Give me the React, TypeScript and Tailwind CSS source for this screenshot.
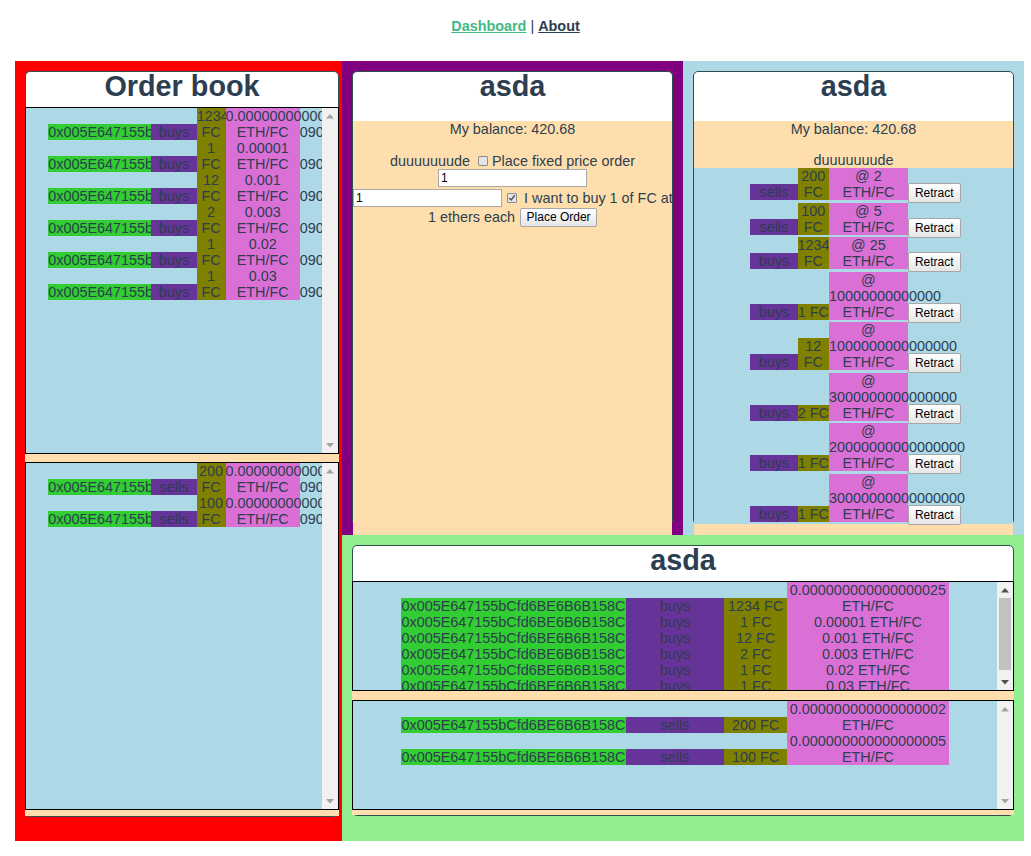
import React from 'react';

const ADDRESS = '0x005E647155bCfd6BE6B6B158C';

type Order = { amount: number; price: string; raw: string };

const buys: Order[] = [
    { amount: 1234, price: '0.000000000000000025', raw: '25' },
    { amount: 1, price: '0.00001', raw: '10000000000000' },
    { amount: 12, price: '0.001', raw: '1000000000000000' },
    { amount: 2, price: '0.003', raw: '3000000000000000' },
    { amount: 1, price: '0.02', raw: '20000000000000000' },
    { amount: 1, price: '0.03', raw: '30000000000000000' },
];

const sells: Order[] = [
    { amount: 200, price: '0.000000000000000002', raw: '2' },
    { amount: 100, price: '0.000000000000000005', raw: '5' },
];

function CheckBox({ checked }: { checked?: boolean }) {
    return (
        <span className="relative inline-block h-[10px] w-[10px] shrink-0 rounded-[1px] border border-[#8e8e8e] bg-[#e4e4e4]">
            {checked && (
                <svg viewBox="0 0 10 10" className="absolute left-0 top-0 h-[8px] w-[8px]">
                    <path d="M1.5 5 L4 7.5 L8.5 1.5" fill="none" stroke="#555" strokeWidth="1.8" />
                </svg>
            )}
        </span>
    );
}

function TextInput() {
    return (
        <input
            readOnly
            value="1"
            className="h-[18px] w-[149px] shrink-0 border border-[#a9a9a9] bg-white px-[2px] text-[12px] leading-[16px] text-black outline-none"
        />
    );
}

function OldButton({ children, className }: { children: React.ReactNode; className: string }) {
    return (
        <button className={`shrink-0 rounded-[2px] border border-[#a6a6a6] bg-linear-to-b from-white to-[#e6e6e6] text-[12px] leading-[16px] text-black ${className}`}>
            {children}
        </button>
    );
}

function Arrow({ down, active }: { down?: boolean; active?: boolean }) {
    return (
        <div className="flex h-[16px] w-[16px] items-center justify-center">
            <svg width="8" height="5" viewBox="0 0 8 5">
                <path d={down ? 'M0 0 L8 0 L4 4.5 Z' : 'M0 4.5 L8 4.5 L4 0 Z'} fill={active ? '#505050' : '#a3a3a3'} />
            </svg>
        </div>
    );
}

function BookRow({ order, side, tail }: { order: Order; side: string; tail?: boolean }) {
    return (
        <div className="mx-auto flex w-[85%] items-end text-center">
            <div className="w-[41%] shrink-0 bg-[#32cd32]">{ADDRESS}</div>
            <div className="w-[18%] shrink-0 bg-[#663399]">{side}</div>
            <div className="w-[11.5%] shrink-0 bg-[#808000]">{order.amount} FC</div>
            <div className="w-[29.5%] shrink-0 bg-[#da70d6]">{order.price} ETH/FC</div>
            {tail && <div className="w-0 shrink-0 whitespace-nowrap text-left">0901</div>}
        </div>
    );
}

function ScrollBox({ orders, side, height, tail, thumb }: { orders: Order[]; side: string; height: string; tail?: boolean; thumb?: boolean }) {
    return (
        <div className={`${height} flex border border-black bg-[#add8e6]`}>
            <div className="min-w-0 flex-1 overflow-hidden">
                {orders.map((o, i) => (
                    <BookRow key={i} order={o} side={side} tail={tail} />
                ))}
            </div>
            <div className="flex w-[16px] shrink-0 flex-col bg-[#f1f1f1]">
                <Arrow active={thumb} />
                <div className="flex-1 px-[2px]">
                    {thumb && <div className="h-[72px] bg-[#c1c1c1]" />}
                </div>
                <Arrow down active={thumb} />
            </div>
        </div>
    );
}

function MyOrderRow({ order, side }: { order: Order; side: string }) {
    return (
        <div className="flex items-end justify-center pb-[2.5px] pl-[4px] text-center">
            <div className="w-[15%] shrink-0 bg-[#663399]">{side}</div>
            <div className="w-[10%] shrink-0 bg-[#808000]">{order.amount} FC</div>
            <div className="w-[25%] shrink-0 bg-[#da70d6]">@ {order.raw} ETH/FC</div>
            <OldButton className="-mb-[3px] h-[20px] w-[53px]">Retract</OldButton>
        </div>
    );
}

export default function App() {
    return (
        <div className="min-h-[856px] bg-white font-['Liberation_Sans',Arial,sans-serif] text-[14.4px] leading-[16px] text-[#2c3e50]">
            <nav className="h-[61px] pt-[18px] text-center">
                <a className="font-bold text-[#42b983] underline">Dashboard</a> |{' '}
                <a className="font-bold underline">About</a>
            </nav>

            <div className="ml-[15px] grid w-[1009px] grid-cols-[327px_341px_341px] grid-rows-[474px_306px]">
                {/* order book */}
                <div className="row-span-2 bg-[#ff0000] pl-[10px] pt-[10px]">
                    <div className="w-[314px] rounded-[5px] border border-[#2f4f4f] bg-white">
                        <h1 className="h-[35px] text-center text-[28.8px] font-bold leading-[28px]">Order book</h1>
                        <div className="-mx-px bg-[#ffdead] pb-[6px]">
                            <ScrollBox orders={buys} side="buys" height="h-[347px]" tail />
                            <div className="h-[8px]" />
                            <ScrollBox orders={sells} side="sells" height="h-[348px]" tail />
                        </div>
                    </div>
                </div>

                {/* place order */}
                <div className="overflow-hidden bg-[#800080] px-[10px] pt-[10px]">
                    <div className="h-[454px] rounded-[5px] border border-[#2f4f4f] bg-white">
                        <h1 className="h-[49px] text-center text-[28.8px] font-bold leading-[28px]">asda</h1>
                        <div className="h-[440px] bg-[#ffdead] text-center">
                            <div className="h-[16px]">My balance: 420.68</div>
                            <div className="h-[15px]" />
                            <div className="flex h-[17px] items-center justify-center">
                                <span>duuuuuuude</span>
                                <span className="ml-[8px] mr-[4px] flex">
                                    <CheckBox />
                                </span>
                                <span>Place fixed price order</span>
                            </div>
                            <div className="flex h-[19px] justify-center">
                                <TextInput />
                            </div>
                            <div className="flex h-[19px] items-center overflow-hidden whitespace-nowrap">
                                <TextInput />
                                <span className="ml-[5px] flex">
                                    <CheckBox checked />
                                </span>
                                <span className="ml-[7px]">I want to buy 1 of FC at</span>
                            </div>
                            <div className="flex h-[20px] items-center justify-center">
                                <span>1 ethers each</span>
                                <OldButton className="ml-[5px] h-[19px] w-[77px]">Place Order</OldButton>
                            </div>
                        </div>
                    </div>
                </div>

                {/* my orders */}
                <div className="overflow-hidden bg-[#add8e6] px-[10px] pt-[10px]">
                    <div className="h-[454px] rounded-[5px] border border-[#2f4f4f] bg-white">
                        <h1 className="h-[49px] text-center text-[28.8px] font-bold leading-[28px]">asda</h1>
                        <div className="bg-[#ffdead] pb-[30px] text-center">
                            <div className="h-[16px]">My balance: 420.68</div>
                            <div className="h-[15px]" />
                            <div className="h-[16px]">duuuuuuude</div>
                            <div className="h-[356px] bg-[#add8e6]">
                                {sells.map((o, i) => (
                                    <MyOrderRow key={'s' + i} order={o} side="sells" />
                                ))}
                                {buys.map((o, i) => (
                                    <MyOrderRow key={'b' + i} order={o} side="buys" />
                                ))}
                            </div>
                        </div>
                    </div>
                </div>

                {/* wide order book */}
                <div className="col-span-2 bg-[#90ee90] p-[10px]">
                    <div className="rounded-[5px] border border-[#2f4f4f] bg-white">
                        <h1 className="h-[35px] text-center text-[28.8px] font-bold leading-[28px]">asda</h1>
                        <div className="-mx-px bg-[#ffdead] pb-[5px]">
                            <ScrollBox orders={buys} side="buys" height="h-[110px]" thumb />
                            <div className="h-[9px]" />
                            <ScrollBox orders={sells} side="sells" height="h-[110px]" />
                        </div>
                    </div>
                </div>
            </div>
        </div>
    );
}
